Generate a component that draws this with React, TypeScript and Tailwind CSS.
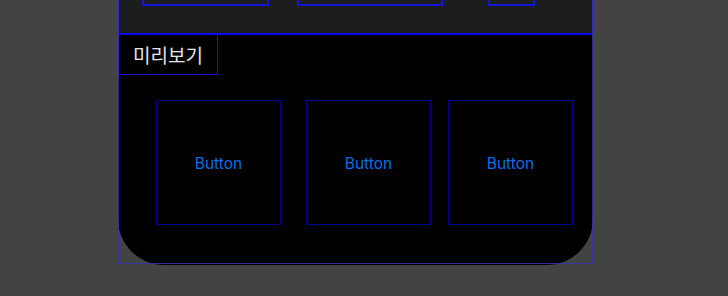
import React from "react";

export default function App() {
  return (
    <div className="relative h-[296px] w-[728px] overflow-hidden bg-[#434343]" style={{ fontFamily: '"Noto Sans CJK KR", "Noto Sans", sans-serif' }}>
      <div className="ml-[118px] w-[475px]">
        {/* top panel */}
        <div className="relative h-[35px] overflow-hidden border-x border-b-2 border-[#0a0af0] bg-[#1c1d1f]">
          <div className="-mt-[24px] flex">
            <div className="ml-[23px] h-[30px] w-[127px] border-2 border-[#1414d8]" />
            <div className="ml-[28px] h-[30px] w-[146px] border-2 border-[#1414d8]" />
            <div className="ml-[45px] h-[30px] w-[47px] border-2 border-[#1414d8]" />
          </div>
        </div>
        {/* black body */}
        <div className="h-[230px] rounded-b-[46px] bg-black">
          <div className="flex h-[40px] w-[100px] items-center border border-t-0 border-[#1414c8] pl-[14px] pt-[1px] text-[19px] text-[#e6e6e6]">
            미리보기
          </div>
          <div className="mt-[25px] flex">
            {[38, 25, 17].map((m, i) => (
              <div
                key={i}
                className="flex h-[125px] w-[125px] items-center justify-center border border-[#00008c] pt-[3px] text-[15.5px] text-[#0a6ee6]"
                style={{ marginLeft: m, fontFamily: '"Inter", "Noto Sans", sans-serif' }}
              >
                Button
              </div>
            ))}
          </div>
        </div>
      </div>
      {/* overlay outline */}
      <div className="pointer-events-none absolute left-[118px] top-[-10px] z-10 h-[274px] w-[475px] border border-[#3535b8]/80" />
    </div>
  );
}
